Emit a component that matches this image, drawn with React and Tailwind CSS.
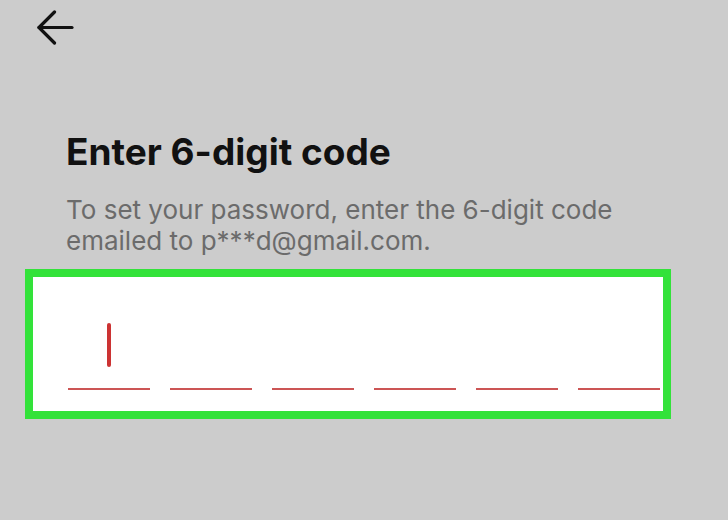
export default function App() {
  const slots = [0, 1, 2, 3, 4, 5];
  return (
    <div className="w-[728px] h-[520px] bg-[#cccccc] overflow-hidden" style={{ fontFamily: "Inter, 'Noto Sans', sans-serif" }}>
      <div className="pl-[36px] pt-[10px] h-[46px]">
        <svg width="38" height="36" viewBox="0 0 38 36" fill="none" stroke="#111" strokeWidth="3.2" strokeLinecap="round" strokeLinejoin="round">
          <path d="M36 17.5H3" />
          <path d="M18.5 2L3 17.5L18.5 33" />
        </svg>
      </div>
      <div className="pl-[66px] pt-[84px]">
        <h1 className="text-[37px] leading-[44px] font-bold text-[#111111]">Enter 6-digit code</h1>
        <p className="mt-[20px] text-[26px] leading-[31px] text-[#6b6b6b]">
          To set your password, enter the 6-digit code<br />emailed to p***d@gmail.com.
        </p>
      </div>
      <div className="ml-[25px] mt-[13px] w-[646px] h-[150px] border-[8px] border-[#33e23a] bg-white">
        <div className="flex gap-[20px] pl-[35px] pt-[46px]">
          {slots.map((i) => (
            <div key={i} className="w-[82px] h-[67px] flex flex-col items-center justify-between">
              <div className={i === 0 ? "w-[4px] h-[44px] rounded-full bg-[#cc3333]" : "h-[44px]"} />
              <div className="w-[82px] h-[2px] bg-[#cc5555]" />
            </div>
          ))}
        </div>
      </div>
    </div>
  );
}
